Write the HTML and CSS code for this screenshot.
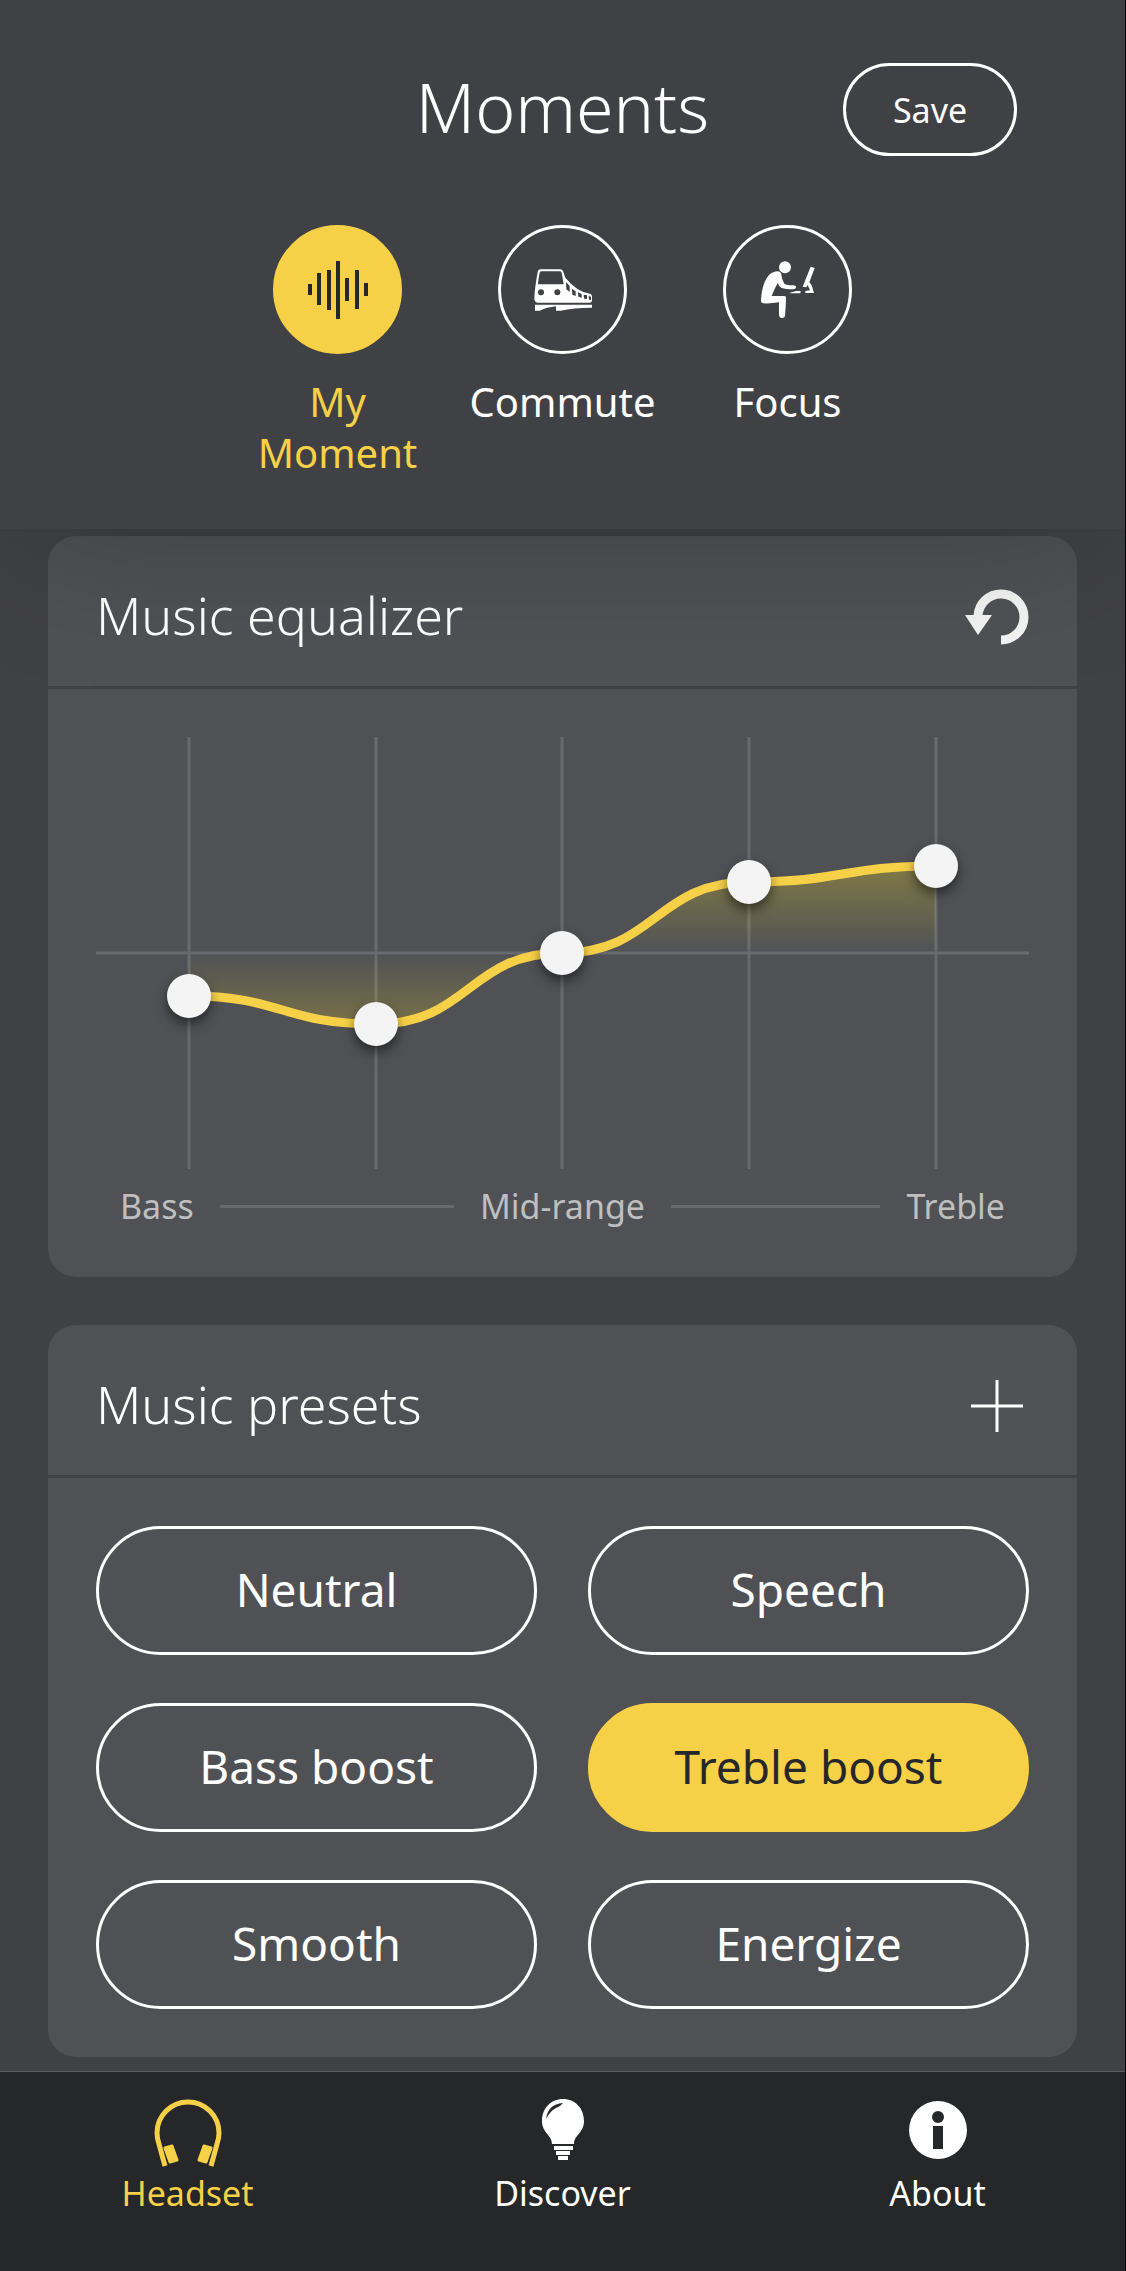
FILE: index.html
```
<!DOCTYPE html>
<html lang="en">
<head>
    <meta charset="UTF-8">
    <meta name="viewport" content="width=device-width, initial-scale=1.0">
    <title>Moments</title>
    <link rel="stylesheet" href="styles.css">
</head>
<body>
    <header class="header">
        <div class="title-row">
            <h1>Moments</h1>
            <button type="button" class="save-btn">Save</button>
        </div>
        <div class="moments">
            <button type="button" class="moment active">
                <span class="circle">
                    <svg viewBox="3 3 123 123" stroke="#262728" stroke-width="4">
                        <path d="M37 59V70M46 48V80M56 45V85M65 36V94M74 53V76M84 45V84M93 58V71"/>
                    </svg>
                </span>
                <span class="label">My<br>Moment</span>
            </button>
            <button type="button" class="moment">
                <span class="circle">
                    <svg viewBox="33 39 369 369" fill="#fff">
                        <path fill-rule="evenodd" d="M152 163H211Q217 163 219 168L226 188Q262 232 300 236Q306 238 306 244V255Q306 263 300 263H142Q133 262 133 250Q134 220 143 172Q144 163 152 163ZM155 169H208Q214 169 215 173L221 208H144Q145 190 149 173Q150 169 155 169ZM144 232a9 9 0 1 0 18 0a9 9 0 1 0-18 0ZM193 232a9 9 0 1 0 18 0a9 9 0 1 0-18 0ZM228 201L239 213V231L229 223ZM246 221L257 229V243L247 239ZM264 232L275 237V248L265 245ZM281 239L291 241V252L282 251ZM296 243L303 245V255L297 254Z"/>
                        <path d="M135 269H306V278Q250 278 212 287H198V274Q170 277 150 287H135Z"/>
                    </svg>
                </span>
                <span class="label">Commute</span>
            </button>
            <button type="button" class="moment">
                <span class="circle">
                    <svg viewBox="33 39 369 369" fill="#fff">
                        <circle cx="210" cy="157" r="18"/>
                        <path d="M187 169Q175 169 162 180Q140 205 138 258Q138 265 145 265Q170 266 192 262V300Q193 309 201 309Q210 309 210 300Q213 270 213 247Q213 243 206 243H170Q178 222 188 204Q192 215 200 219Q220 224 238 222Q244 220 243 214Q242 212 235 211Q215 211 208 206Q200 195 199 178Q197 169 187 169Z"/>
                        <path d="M287 155L299 159L283 202L290 211L297 234H271V228L285 226L278 210L274 217L263 215ZM224 233L244 228H257L256 235H226Z"/>
                    </svg>
                </span>
                <span class="label">Focus</span>
            </button>
        </div>
    </header>

    <main class="content">
        <section class="card">
            <div class="card-header">
                <h2>Music equalizer</h2>
                <button type="button" class="icon-btn" aria-label="Reset">
                    <svg viewBox="0 0 64 64">
                        <path d="M13 31A23 23 0 1 1 36 55" fill="none" stroke="#f4f4f4" stroke-width="9"/>
                        <path d="M0 30H27L13 50Z" fill="#f4f4f4"/>
                    </svg>
                </button>
            </div>
            <div class="card-body">
                <svg class="chart" viewBox="0 0 933 432">
                    <defs>
                        <linearGradient id="fade" gradientUnits="userSpaceOnUse" x1="0" y1="0" x2="0" y2="432">
                            <stop offset="0" stop-color="#ffe020" stop-opacity="0.7"/>
                            <stop offset="0.5" stop-color="#ffe020" stop-opacity="0"/>
                            <stop offset="1" stop-color="#ffd020" stop-opacity="0.7"/>
                        </linearGradient>
                    </defs>
                    <g stroke="#696a6e" stroke-width="3">
                        <path d="M93 0V432M280 0V432M466 0V432M653 0V432M840 0V432"/>
                        <path d="M0 216H933"/>
                    </g>
                    <path fill="url(#fade)" d="M93 216V259C186 259 187 287 280 287C373 287 373 216 466 216C559 216 560 145 653 145C746 145 747 129 840 129V216Z"/>
                    <path fill="none" stroke="#f6d147" stroke-width="9" d="M93 259C186 259 187 287 280 287C373 287 373 216 466 216C559 216 560 145 653 145C746 145 747 129 840 129"/>
                    <g class="knobs">
                        <circle cx="93" cy="259" r="22"/>
                        <circle cx="280" cy="287" r="22"/>
                        <circle cx="466" cy="216" r="22"/>
                        <circle cx="653" cy="145" r="22"/>
                        <circle cx="840" cy="129" r="22"/>
                    </g>
                </svg>
                <div class="ranges">
                    <div class="range">Bass</div>
                    <div>Mid-range</div>
                    <div class="range right">Treble</div>
                </div>
            </div>
        </section>

        <section class="card">
            <div class="card-header">
                <h2>Music presets</h2>
                <button type="button" class="icon-btn" aria-label="Add preset">
                    <svg viewBox="0 0 64 64" stroke="#fff" stroke-width="3">
                        <path d="M32 6V58M6 32H58"/>
                    </svg>
                </button>
            </div>
            <div class="card-body presets">
                <button type="button" class="preset">Neutral</button>
                <button type="button" class="preset">Speech</button>
                <button type="button" class="preset">Bass boost</button>
                <button type="button" class="preset active">Treble boost</button>
                <button type="button" class="preset">Smooth</button>
                <button type="button" class="preset">Energize</button>
            </div>
        </section>
    </main>

    <nav class="tabs">
        <a href="#headset" class="tab active">
            <svg viewBox="0 0 68 68">
                <path d="M11 67L5 45Q3 39 3 34A31 31 0 0 1 65 34Q65 39 63 45L57 67" fill="none" stroke="#f6d147" stroke-width="5"/>
                <path d="M11 49L18 47L23 61L16 63ZM57 49L50 47L45 61L52 63Z" fill="#f6d147" stroke="#f6d147" stroke-width="3" stroke-linejoin="round"/>
            </svg>
            <span>Headset</span>
        </a>
        <a href="#discover" class="tab">
            <svg viewBox="-13 0 68 68">
                <path d="M21 0C9 0 0 9 0 22C0 34 10 36 10 45H32C32 36 42 34 42 22C42 9 33 0 21 0Z" fill="#fff"/>
                <path d="M12 47H31V51H12ZM14 52H28V56H14ZM16 57H26V61H16Z" fill="#fff"/>
                <path d="M4 20Q6 5 21 4Q19 7 14 9Q8 12 4 20Z" fill="#262728"/>
            </svg>
            <span>Discover</span>
        </a>
        <a href="#about" class="tab">
            <svg viewBox="0 0 68 68">
                <circle cx="34" cy="31" r="29" fill="#fff"/>
                <circle cx="34" cy="18" r="6" fill="#262728"/>
                <path d="M29 27H39V50H29Z" fill="#262728"/>
            </svg>
            <span>About</span>
        </a>
    </nav>
</body>
</html>
```
FILE: styles.css
```
* {
    box-sizing: border-box;
}

body {
    display: flex;
    flex-direction: column;
    min-height: 100vh;
    margin: 0;
    font-family: "Noto Sans", sans-serif;
    color: #fff;
    background-color: #404145;
    border-right: 1px solid #000;
}

h1, h2 {
    margin: 0;
    font-weight: 300;
}

button {
    padding: 0;
    font-family: inherit;
    color: inherit;
    background: none;
    border: none;
    cursor: pointer;
}

svg {
    display: block;
}

/* header */
.header {
    position: relative;
    z-index: 1;
    padding: 63px 108px 51px;
    background-color: #404145;
    box-shadow: 0 24px 140px -24px rgba(0, 0, 0, 0.25);
}

.title-row {
    display: grid;
    grid-template-columns: 1fr auto 1fr;
    align-items: center;
}

h1 {
    grid-column: 2;
    padding-bottom: 5px;
    font-size: 68px;
    line-height: 88px;
}

.save-btn {
    justify-self: end;
    width: 174px;
    height: 93px;
    font-size: 34px;
    border: 3px solid #fff;
    border-radius: 47px;
}

.moments {
    display: flex;
    justify-content: center;
    margin-top: 69px;
}

.moment {
    display: flex;
    flex-direction: column;
    align-items: center;
    gap: 22px;
    width: 225px;
}

.circle {
    width: 129px;
    height: 129px;
    border: 3px solid #fff;
    border-radius: 50%;
}

.label {
    font-size: 40px;
    line-height: 51px;
}

.moment.active {
    color: #f6d147;
}

.moment.active .circle {
    background-color: #f6d147;
    border-color: #f6d147;
}

/* cards */
.content {
    display: flex;
    flex-direction: column;
    flex: 1;
    gap: 48px;
    padding: 7px 48px 14px;
}

.card {
    background-color: #505155;
    border-radius: 28px;
}

.card-header {
    display: flex;
    justify-content: space-between;
    align-items: center;
    height: 153px;
    padding: 12px 48px 0;
    border-bottom: 3px solid #404145;
}

h2 {
    padding-bottom: 4px;
    font-size: 52px;
    line-height: 70px;
}

.icon-btn {
    width: 64px;
    height: 64px;
}

.card-body {
    padding: 48px;
}

.chart {
    width: 100%;
    overflow: visible;
}

.knobs {
    fill: #f4f4f4;
    filter: drop-shadow(0 6px 6px rgba(0, 0, 0, 0.5));
}

.ranges {
    display: grid;
    grid-template-columns: 1fr auto 1fr;
    gap: 26px;
    margin-top: 14px;
    padding: 0 24px;
    font-size: 34px;
    line-height: 46px;
    color: #bfbfc0;
}

.range {
    display: flex;
    align-items: center;
    gap: 26px;
}

.range::after {
    content: "";
    flex: 1;
    height: 3px;
    background-color: #696a6e;
}

.range.right {
    flex-direction: row-reverse;
}

.presets {
    display: grid;
    grid-template-columns: 1fr 1fr;
    gap: 48px 51px;
}

.preset {
    height: 129px;
    padding-bottom: 3px;
    font-size: 46px;
    border: 3px solid #fff;
    border-radius: 65px;
}

.preset.active {
    color: #262728;
    background-color: #f6d147;
    border-color: #f6d147;
}

/* bottom tabs */
.tabs {
    display: flex;
    height: 200px;
    padding-top: 27px;
    background-color: #262728;
    border-top: 1px solid #5c5d60;
}

.tab {
    display: flex;
    flex: 1;
    flex-direction: column;
    align-items: center;
    gap: 4px;
    font-size: 34px;
    line-height: 44px;
    color: #fff;
    text-decoration: none;
}

.tab svg {
    width: 68px;
    height: 68px;
}

.tab.active {
    color: #f6d147;
}
```
